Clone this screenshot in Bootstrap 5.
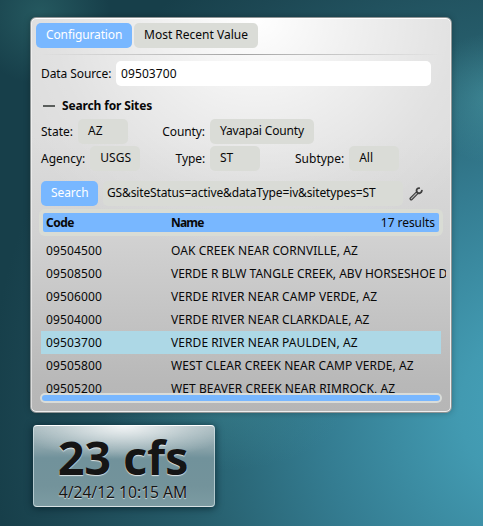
<!DOCTYPE html>
<html lang="en">
<head>
<meta charset="utf-8">
<meta name="viewport" content="width=device-width, initial-scale=1">
<title>Water data widget</title>
<link rel="stylesheet" href="https://cdn.jsdelivr.net/npm/bootstrap@5.3.0/dist/css/bootstrap.min.css">
<style>
html, body { height: 100%; }
body {
  font: 12px/23px "Noto Sans", "Open Sans", sans-serif; color: #080808; overflow: hidden;
  padding: 17px 0 0 30px;
  background:
    radial-gradient(circle 70px at 40px 14px, rgba(60,130,130,.38), transparent),
    radial-gradient(circle 65px at 490px 98px, rgba(90,180,190,.36), transparent),
    radial-gradient(ellipse 120px 60px at 222px 410px, rgba(70,150,160,.3), transparent),
    radial-gradient(ellipse 560px 560px at 550px 410px, #46a4bd 0%, #429ab1 16%, #347c91 41%, #265d6b 66%, #1d4854 88%, #173f4a 100%);
}
.panel {
  width: 422px; height: 396px; border: 1px solid #8e9495; border-radius: 6px;
  box-shadow: inset 0 1px #fff, inset 1px 0 rgba(255,255,255,.5), inset -1px 0 #eee, inset 0 -1px #eee, 0 0 6px rgba(0,0,0,.25);
  padding: 5px;
  background: radial-gradient(ellipse 270px 240px at 225px 0, #fff, rgba(255,255,255,.55) 38%, rgba(255,255,255,.15) 75%, transparent),
    linear-gradient(#dcdcdc 0, #dcdcdc 30%, #d2d2d2 55%, #b8b8b8 93%, #b6b6b6);
}
.btn.pill {
  --bs-btn-padding-x: 10px; --bs-btn-padding-y: 0; --bs-btn-border-radius: 5px;
  --bs-btn-bg: #dadcd7; --bs-btn-color: #080808; --bs-btn-border-width: 0;
  flex: none; height: 25px; font-size: 12px; line-height: 23px; text-align: left; white-space: nowrap; padding-bottom: 2px;
}
.btn.pill.blue { --bs-btn-bg: #78b7ff; --bs-btn-color: #fff; }
.w-conf { width: 96px; letter-spacing: -.12px; } .w-recent { width: 124px; } .w-small { width: 50px; }
.w-county { width: 104px; letter-spacing: -.17px; } .w-search { width: 57px; letter-spacing: -.08px; }
.tabs { gap: 2px; }
.rule { height: 1px; margin: 6px 4px 6px 3px; background: linear-gradient(90deg, transparent, #a2a2a2 50%, transparent); }
.inset-l { padding-left: 5px; }
.source-label { width: 75px; padding-top: 1px; white-space: nowrap; letter-spacing: -.09px; }
.form-control.source { width: 315px; height: 25px; border: 0; border-radius: 5px; padding: 0 5px; font-size: 12px; line-height: 25px; color: #080808; letter-spacing: .1px; }
.section-title { height: 33px; padding: 6px 0 0 7px; letter-spacing: -.15px; }
.dash { width: 12px; height: 2px; margin-right: 7px; background: #5a5e5c; }
.filters { display: grid; grid-template-columns: 117px 137px 1fr; row-gap: 2px; height: 52px; line-height: 25px; }
.filters > div { display: flex; gap: 5px; white-space: nowrap; }
.filters .label-b { width: 47px; flex: none; text-align: right; letter-spacing: -.1px; }
.search-line { margin-top: 10px; }
.url { width: 300px; height: 25px; background: #d9dbd6; border-radius: 5px; padding-left: 4px; line-height: 24px; letter-spacing: -.14px; white-space: nowrap; overflow: hidden; margin: 0 6px 0 5px; }
.head-frame { width: 404px; height: 27px; margin: 3px 0 3px 3px; padding: 4px; border-radius: 6px; background: #d9dcd5; }
.head-bar { height: 19px; line-height: 19px; background: #78b7ff; border-radius: 2px; padding: 0 4px 0 3px; }
.head-bar .c-code, .h-name { letter-spacing: -.5px; }
.h-name { letter-spacing: -.8px; }
.h-count { letter-spacing: -.05px; }
.c-code { width: 125px; flex: none; letter-spacing: .13px; }
.c-name { letter-spacing: .07px; }
.sites { height: 154px; width: 405px; margin-left: 5px; overflow: hidden; }
.site { height: 23px; width: 400px; padding-left: 5px; white-space: nowrap; }
.picked { background: #add8e6; }
.track { width: 402px; height: 10px; margin-left: 4px; padding: 2px; background: #d9dcd9; border-radius: 5px; }
.thumb { height: 6px; border-radius: 3px; background: #78b7ff; }
.gauge {
  width: 182px; height: 82px; margin: 12px 0 0 3px; border-radius: 4px; padding-right: 2px;
  border: 1px solid rgba(220,235,238,.6); border-top-color: #fff; border-bottom-color: #d8e2e4;
  background: radial-gradient(ellipse 110px 34px at 50% 0, rgba(255,255,255,.85), rgba(255,255,255,.3) 60%, transparent),
   linear-gradient(#a4b7bc 0, #88a2a9 28%, #71929b 40%, #73939b 75%, #7c9ba2);
  box-shadow: 0 1px 7px 1px rgba(0,25,35,.6);
  color: #151515; text-shadow: 0 1px 1px rgba(255,255,255,.75);
}
.flow { font-size: 47px; font-weight: 700; line-height: 48px; padding-top: 7px; white-space: nowrap; letter-spacing: -.25px; }
.stamp { font-size: 15.7px; line-height: 22px; white-space: nowrap; letter-spacing: -.03px; }
</style>
<script src="https://cdn.jsdelivr.net/npm/bootstrap@5.3.0/dist/js/bootstrap.bundle.min.js"></script>
</head>
<body>
<main class="panel">
  <div class="d-flex tabs">
    <button class="btn pill blue w-conf">Configuration</button>
    <button class="btn pill w-recent">Most Recent Value</button>
  </div>
  <div class="rule"></div>
  <div class="d-flex inset-l">
    <label class="source-label" for="src">Data Source:</label>
    <input id="src" class="form-control source" value="09503700">
  </div>
  <div class="section-title d-flex align-items-center fw-bold"><span class="dash"></span><span>Search for Sites</span></div>
  <div class="filters inset-l">
    <div><span>State:</span><button class="btn pill w-small">AZ</button></div>
    <div><span class="label-b">County:</span><button class="btn pill w-county">Yavapai County</button></div>
    <div></div>
    <div><span>Agency:</span><button class="btn pill w-small">USGS</button></div>
    <div><span class="label-b">Type:</span><button class="btn pill w-small">ST</button></div>
    <div><span>Subtype:</span><button class="btn pill w-small">All</button></div>
  </div>
  <div class="d-flex inset-l align-items-center search-line">
    <button class="btn pill blue w-search">Search</button>
    <div class="url">GS&amp;siteStatus=active&amp;dataType=iv&amp;sitetypes=ST</div>
    <svg width="14" height="14" viewBox="0 0 14 14" fill="none" stroke="#3d3d3d" stroke-linecap="round" stroke-linejoin="round">
      <path d="M2.2 11.7 7.8 6.1" stroke-width="3.4"/>
      <path d="M10.2 1.2C7.8 1 6.9 3.3 8 5.3c1.5 1.7 4.6.9 4.9-1.6" stroke-width="1.8"/>
      <path d="M2.3 11.6 7.4 6.5" stroke="#b5b5b5" stroke-width="1.1"/>
    </svg>
  </div>
  <div class="head-frame"><div class="head-bar d-flex fw-bold"><span class="c-code">Code</span><span class="h-name">Name</span><span class="h-count fw-normal ms-auto">17 results</span></div></div>
  <div class="sites">
    <div class="site d-flex"><span class="c-code">09504500</span><span class="c-name">OAK CREEK NEAR CORNVILLE, AZ</span></div>
    <div class="site d-flex"><span class="c-code">09508500</span><span>VERDE R BLW TANGLE CREEK, ABV HORSESHOE DAM, AZ</span></div>
    <div class="site d-flex"><span class="c-code">09506000</span><span class="c-name">VERDE RIVER NEAR CAMP VERDE, AZ</span></div>
    <div class="site d-flex"><span class="c-code">09504000</span><span class="c-name">VERDE RIVER NEAR CLARKDALE, AZ</span></div>
    <div class="site d-flex picked"><span class="c-code">09503700</span><span class="c-name">VERDE RIVER NEAR PAULDEN, AZ</span></div>
    <div class="site d-flex"><span class="c-code">09505800</span><span class="c-name">WEST CLEAR CREEK NEAR CAMP VERDE, AZ</span></div>
    <div class="site d-flex"><span class="c-code">09505200</span><span class="c-name">WET BEAVER CREEK NEAR RIMROCK, AZ</span></div>
  </div>
  <div class="track"><div class="thumb"></div></div>
</main>
<section class="gauge text-center">
  <div class="flow">23 cfs</div>
  <div class="stamp">4/24/12 10:15 AM</div>
</section>
</body>
</html>
